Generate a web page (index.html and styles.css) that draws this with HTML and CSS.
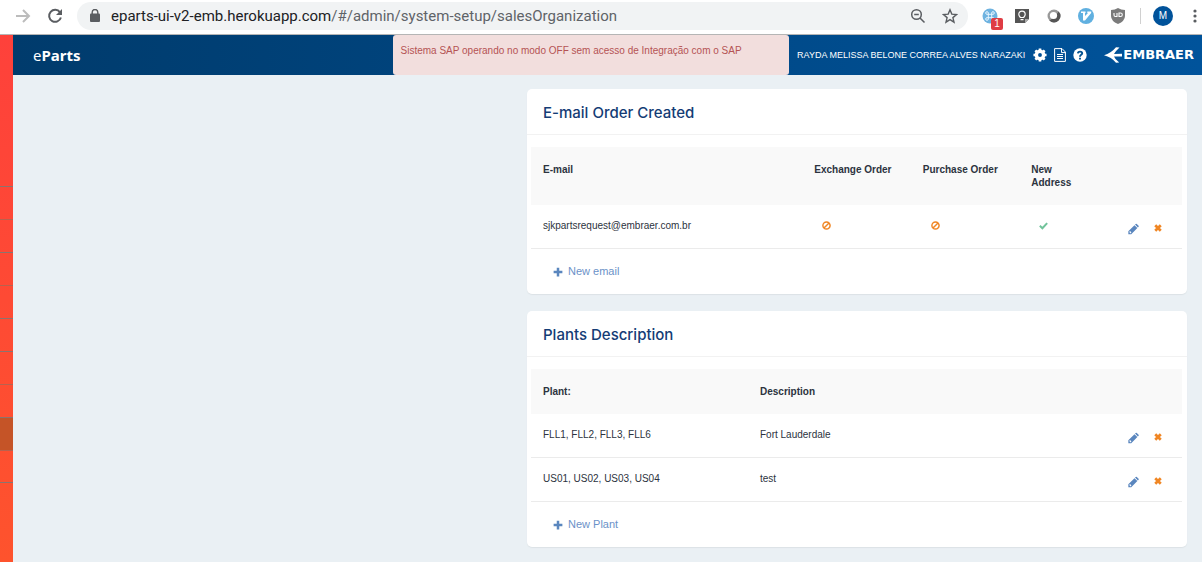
FILE: index.html
```html
<!DOCTYPE html>
<html lang="pt-BR">
<head>
<meta charset="utf-8">
<meta name="viewport" content="width=device-width, initial-scale=1">
<title>eParts</title>
<link rel="stylesheet" href="styles.css">
</head>
<body>
<svg class="defs" aria-hidden="true">
  <symbol id="ban" viewBox="0 0 16 16"><g fill="none" stroke="currentColor" stroke-width="2.6"><circle cx="8" cy="8" r="6.4"/><path d="M3.5 12.5l9-9"/></g></symbol>
  <symbol id="check" viewBox="0 0 16 16"><path d="M1.5 8.5l4.5 4.3 8.5-9" fill="none" stroke="currentColor" stroke-width="3.6"/></symbol>
  <symbol id="cross" viewBox="0 0 16 16"><path d="M2.500 2.500l11 11M13.500 2.500l-11 11" fill="none" stroke="currentColor" stroke-width="5.500"/></symbol>
  <symbol id="plus" viewBox="0 0 16 16"><path d="M8 1v14M1 8h14" fill="none" stroke="currentColor" stroke-width="4"/></symbol>
  <symbol id="pencil" viewBox="0 0 16 16"><path fill="currentColor" fill-rule="evenodd" d="M.5 15.5v-4.2L9.4 2.4l4.2 4.2-8.9 8.9zM2 12v1h1v1h1l1-1-2-2zM10.200 1.600l1-1q.8-.6 1.600 0l2.600 2.600q.6.8 0 1.600l-1 1z"/></symbol>
</svg>

<div class="browser">
  <button class="nav" aria-label="Forward"><svg width="16" height="16" viewBox="0 0 16 16" fill="none" stroke="#bcbcbc" stroke-width="2"><path d="M1 8h13M8 2l6 6-6 6"/></svg></button>
  <button class="nav" aria-label="Reload"><svg width="16" height="16" viewBox="0 0 16 16"><path d="M13 4.300A6 6 0 1 0 13.900 9.500" fill="none" stroke="#5a5d61" stroke-width="2"/><path d="M15 1v6H9z" fill="#5a5d61"/></svg></button>
  <div class="address">
    <svg width="10" height="14" viewBox="0 0 10 14"><rect x="0" y="4.500" width="10" height="8.500" rx="1" fill="#5a5d61"/><path d="M2.200 5V3.300a2.800 2.800 0 0 1 5.600 0V5" fill="none" stroke="#5a5d61" stroke-width="1.400"/></svg>
    <span class="url">eparts-ui-v2-emb.herokuapp.com<span class="path">/#/admin/system-setup/salesOrganization</span></span>
    <button class="nav" aria-label="Zoom"><svg width="16" height="16" viewBox="0 0 16 16" fill="none" stroke="#5a5d61" stroke-width="1.500"><circle cx="6.500" cy="6.500" r="4.800"/><path d="M10 10l4.500 4.500M4.200 6.500h4.600"/></svg></button>
    <button class="nav" aria-label="Bookmark"><svg width="16" height="16" viewBox="0 0 16 16" fill="none" stroke="#5a5d61" stroke-width="1.400"><path d="M8 1.800l1.800 4.300 4.700.4-3.600 3.100 1.100 4.600L8 11.700l-4 2.500 1.100-4.600L1.500 6.500l4.700-.4z"/></svg></button>
  </div>
  <div class="extensions">
    <button class="nav ext" aria-label="Shortcuts"><svg width="16" height="16" viewBox="0 0 16 16"><circle cx="8" cy="8" r="7.500" fill="#6fb3e0"/><path d="M6.300 6.300H5a1.300 1.300 0 1 1 1.300-1.300v6A1.300 1.300 0 1 1 5 9.700h6A1.300 1.300 0 1 1 9.700 11V5A1.300 1.300 0 1 1 11 6.300z" fill="none" stroke="#e8f5ff" stroke-width="1"/></svg><span class="badge">1</span></button>
    <button class="nav" aria-label="Ideas"><svg width="16" height="16" viewBox="0 0 16 16"><path d="M1 1h14v10l-4 4H1z" fill="#555"/><path d="M15 11h-4v4z" fill="#aaa"/><path d="M6.500 9.500C5.500 8.500 4.800 8 4.800 6.300a3.200 3.200 0 0 1 6.400 0c0 1.700-.7 2.200-1.700 3.200zM6.500 11.700h3" fill="none" stroke="#fff" stroke-width="1.200"/></svg></button>
    <button class="nav" aria-label="Lens"><svg width="16" height="16" viewBox="0 0 16 16"><circle cx="8" cy="8" r="6.500" fill="#999"/><path d="M3.400 12.600A6.500 6.500 0 0 0 12.600 3.400L9 9z" fill="#555"/><circle cx="7.500" cy="7.500" r="3.600" fill="#fff"/></svg></button>
    <button class="nav" aria-label="Vim"><svg width="16" height="16" viewBox="0 0 16 16"><circle cx="8" cy="8" r="8" fill="#60b0e0"/><path d="M3 3.500h4.500V5H7v3l3-3h-.7V3.500h3.900V5L7 12.500H5V5H3z" fill="#fff"/></svg></button>
    <button class="nav" aria-label="Shield"><svg width="16" height="16" viewBox="0 0 16 16"><path d="M8 0q3 2 7 2v6q0 5-7 8-7-3-7-8V2q4 0 7-2z" fill="#7b7b7b"/><path d="M4 5v2q0 1.500 1.300 1.500H7V5M9 8.500V5h1.500q1.800 0 1.800 1.700T10.500 8.500z" fill="none" stroke="#fff" stroke-width="1.100"/></svg></button>
  </div>
  <button class="avatar" aria-label="Profile">M</button>
  <button class="nav dots" aria-label="Menu"><svg width="4" height="16" viewBox="0 0 4 16" fill="#5a5d61"><circle cx="2" cy="3" r="1.600"/><circle cx="2" cy="8" r="1.600"/><circle cx="2" cy="13" r="1.600"/></svg></button>
</div>

<div class="app">
  <nav class="rail" aria-label="Menu">
    <a href="#a"></a><a class="sub" href="#b"></a><a href="#c"></a><a class="sub" href="#d"></a><a href="#e"></a><a href="#f"></a><a class="sub" href="#g"></a><a class="current" href="#h"></a><a class="sub" href="#i"></a>
  </nav>
  <div class="page">
    <header class="topbar">
      <a class="brand" href="#home">e<b>Parts</b></a>
      <div class="alert" role="alert">Sistema SAP operando no modo OFF sem acesso de Integração com o SAP</div>
      <div class="user">
        <span class="name">RAYDA MELISSA BELONE CORREA ALVES NARAZAKI</span>
        <button class="tool" aria-label="Settings"><svg width="14" height="14" viewBox="0 0 16 16"><circle cx="8" cy="8" r="4.200" fill="none" stroke="#fff" stroke-width="4"/><path d="M8 .5v3M8 12.500v3M.5 8h3M12.500 8h3M2.700 2.700l2 2M11.300 11.300l2 2M13.300 2.700l-2 2M4.700 11.300l-2 2" stroke="#fff" stroke-width="3"/></svg></button>
        <button class="tool" aria-label="Documents"><svg width="12" height="14" viewBox="0 0 12 14" fill="none" stroke="#fff"><path d="M.6.600h7.400l3.400 3.400v9.400H.6zM7.500.600v4h4M3 6.500h6M3 8.500h6M3 10.500h6"/></svg></button>
        <button class="tool" aria-label="Help"><svg width="14" height="14" viewBox="0 0 14 14"><circle cx="7" cy="7" r="6.700" fill="#fff"/><path d="M4.900 5.400C5 3 9.200 3 9.200 5.300 9.200 6.900 7 6.800 7 8.700M7 9.700v1.800" fill="none" stroke="#00508f" stroke-width="1.900"/></svg></button>
        <a class="logo" href="#embraer"><svg width="18" height="16" viewBox="0 0 18 16" fill="#fff"><path d="M0 8.200Q7 6.200 12 .2L15.500 .5Q11.500 4.200 10 6.900L18 6.800v2.800H10q1 3 5.200 5.900l-3.200.3Q7.500 10 0 8.200z"/></svg><span>EMBRAER</span></a>
      </div>
    </header>

    <main class="content">
      <section class="card">
        <h2>E-mail Order Created</h2>
        <table class="emails">
          <colgroup><col class="five"><col class="two"><col class="two"><col><col></colgroup>
          <thead><tr><th>E-mail</th><th>Exchange Order</th><th>Purchase Order</th><th>New Address</th><th></th></tr></thead>
          <tbody>
            <tr><td>sjkpartsrequest@embraer.com.br</td>
              <td class="flag"><svg class="icon off" role="img" aria-label="No"><use href="#ban"/></svg></td>
              <td class="flag"><svg class="icon off" role="img" aria-label="No"><use href="#ban"/></svg></td>
              <td class="flag"><svg class="icon on" role="img" aria-label="Yes"><use href="#check"/></svg></td>
              <td class="actions"><div><button class="edit" aria-label="Edit"><svg><use href="#pencil"/></svg></button><button class="remove" aria-label="Remove"><svg><use href="#cross"/></svg></button></div></td></tr>
          </tbody>
        </table>
        <button class="add"><svg><use href="#plus"/></svg>New email</button>
      </section>

      <section class="card">
        <h2>Plants Description</h2>
        <table>
          <colgroup><col class="four"><col><col class="two"></colgroup>
          <thead><tr><th>Plant:</th><th>Description</th><th></th></tr></thead>
          <tbody>
            <tr><td>FLL1, FLL2, FLL3, FLL6</td><td>Fort Lauderdale</td>
              <td class="actions"><div><button class="edit" aria-label="Edit"><svg><use href="#pencil"/></svg></button><button class="remove" aria-label="Remove"><svg><use href="#cross"/></svg></button></div></td></tr>
            <tr><td>US01, US02, US03, US04</td><td>test</td>
              <td class="actions"><div><button class="edit" aria-label="Edit"><svg><use href="#pencil"/></svg></button><button class="remove" aria-label="Remove"><svg><use href="#cross"/></svg></button></div></td></tr>
          </tbody>
        </table>
        <button class="add"><svg><use href="#plus"/></svg>New Plant</button>
      </section>
    </main>
  </div>
</div>
</body>
</html>
```
FILE: styles.css
```css
* { box-sizing: border-box; }
body {
  margin: 0;
  min-height: 100vh;
  display: flex;
  flex-direction: column;
  background: #eaf0f4;
  color: #2c3340;
  font: 10px/13px "Liberation Sans", Arial, sans-serif;
}
button { margin: 0; padding: 0; border: 0; background: none; font: inherit; color: inherit; }
a { text-decoration: none; color: inherit; }
.defs { display: none; }

/* Browser toolbar */
.browser {
  display: flex;
  align-items: center;
  height: 35px;
  padding: 0 5px 3px 15px;
  background: #fff;
  border-bottom: 1px solid #b5b5b5;
}
.nav { display: flex; flex: none; }
.browser > .nav + .nav { margin-left: 16px; }
.address {
  flex: 1;
  display: flex;
  align-items: center;
  height: 28px;
  margin-left: 14px;
  padding: 0 10px 0 13px;
  border-radius: 14px;
  background: #f1f3f4;
}
.url { flex: 1; margin-left: 11px; font: 15px/20px Roboto, sans-serif; color: #202124; white-space: nowrap; }
.path { color: #5f6368; }
.address .nav + .nav { margin-left: 16px; }
.extensions {
  display: flex;
  gap: 16px;
  margin-left: 14px;
  padding-right: 14px;
  border-right: 1px solid #d0d0d0;
}
.ext { position: relative; }
.badge {
  position: absolute;
  left: 9px;
  top: 10px;
  width: 12px;
  border-radius: 2px;
  background: #df3c44;
  color: #fff;
  font-size: 10px;
  line-height: 12px;
}
.avatar {
  width: 20px;
  height: 20px;
  margin-left: 12px;
  border-radius: 50%;
  background: #00529a;
  color: #fff;
}
.browser > .dots { margin-left: 20px; }

/* Frame */
.app { flex: 1; display: flex; }
.rail {
  flex: none;
  width: 13px;
  padding-top: 151px;
  background: linear-gradient(#fe413b, #fe532d);
}
.rail a { display: block; height: 33px; border-top: 1px solid #8b746f; }
.rail .sub { border-top-color: #b8624f; }
.rail a:last-child { border-bottom: 1px solid #8b746f; }
.rail .current { background: #c55427; }
.page { flex: 1; min-width: 0; }

.topbar {
  display: grid;
  grid-template-columns: 379fr 396fr auto;
  min-height: 40px;
  color: #fff;
  background: linear-gradient(90deg, #003b6c, #00539b);
}
.brand { padding: 8px 20px; font: 15px/24px "Noto Sans", sans-serif; }
.alert {
  padding: 9px 8px;
  border-radius: 3px;
  background: #f2dedd;
  color: #b55354;
  white-space: nowrap;
}
.user { display: flex; align-items: center; padding: 0 8px; }
.name { margin-right: 1px; white-space: nowrap; font-size: 9px; }
.tool { display: flex; margin-left: 7px; }
.logo { display: flex; align-items: center; gap: 1px; margin-left: 17px; font: bold 13px/16px "DejaVu Sans", sans-serif; }

/* Cards */
.content {
  display: grid;
  grid-template-columns: 499fr 660fr;
  gap: 17px 0;
  padding: 14px 15px;
}
.card {
  grid-column: 2;
  border-radius: 5px;
  background: #fff;
  box-shadow: 0 1px 1px #dce2e6;
}
h2 {
  margin: 0 0 12px;
  padding: 13px 16px 10px;
  border-bottom: 1px solid #f2f2f2;
  color: #143c75;
  font: 500 15px/22px Inter, sans-serif;
}
table {
  width: calc(100% - 9px);
  margin-left: 4px;
  border-collapse: separate;
  border-spacing: 0;
  table-layout: fixed;
}
.five { width: calc(100% * 5 / 12); }
.four { width: calc(100% * 4 / 12); }
.two { width: calc(100% * 2 / 12); }
th { padding: 16px 12px; background: #f9f9f9; text-align: left; vertical-align: top; font-weight: bold; }
td { padding: 14px 12px 16px; border-bottom: 1px solid #ebebeb; vertical-align: top; }
td.flag { padding-left: 20px; }
.icon { display: block; width: 9px; height: 9px; margin: 2px 0; }
.off { color: #f08624; }
.on { color: #71c39b; }
.actions { padding: 18px 20px 0 0; }
.actions div { display: flex; justify-content: flex-end; align-items: flex-start; gap: 15px; }
.actions button { display: flex; }
.edit { color: #5a86be; }
.edit svg { width: 11px; height: 12px; }
.remove { color: #f08624; }
.remove svg { width: 8px; height: 10px; }
.add {
  display: flex;
  align-items: center;
  gap: 5px;
  padding: 14px 26px;
  color: #6b92c8;
  font-size: 11px;
  line-height: 17px;
}
.add svg { width: 10px; height: 10px; color: #5a86be; }
```
